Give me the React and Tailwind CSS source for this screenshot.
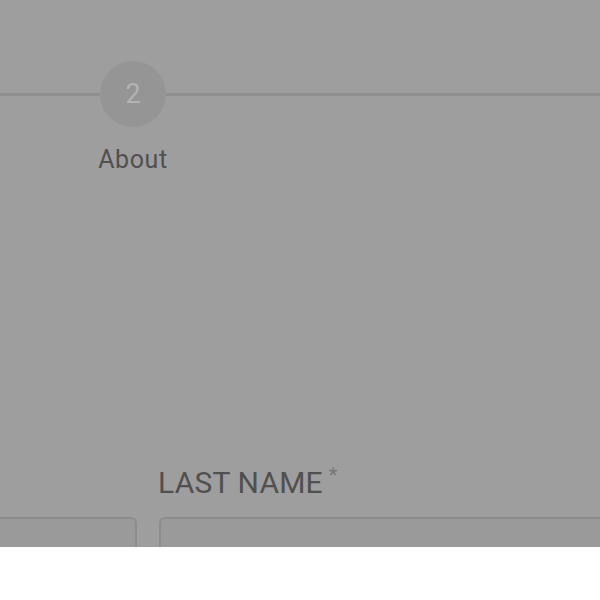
export default function App() {
  return (
    <div className="w-[600px] h-[600px] bg-white overflow-hidden" style={{ fontFamily: "Roboto, sans-serif" }}>
      <div className="h-[547px] bg-[#9e9e9e] flex flex-col">
        <div className="mt-[61px] flex items-center">
          <div className="w-[100px] h-[3px] bg-[#8f8f8f]" />
          <div className="w-[66px] h-[66px] rounded-full bg-[#959595] flex items-center justify-center text-[#b3b3b3] text-[27px]">
            2
          </div>
          <div className="flex-1 h-[3px] bg-[#8f8f8f]" />
        </div>
        <div className="w-[266px] text-center text-[25px] leading-[30px] text-[#505050] mt-[18px] tracking-[0.6px]">About</div>
        <div className="flex-1" />
        <div className="flex gap-[22px]">
          <div className="w-[136px]" />
          <div className="text-[30px] leading-[34px] text-[#505050] tracking-[0.2px] flex items-start">
            LAST NAME
            <span className="text-[20px] leading-[20px] ml-[6px] mt-[-1px] text-[#777]">*</span>
          </div>
        </div>
        <div className="mt-[17px] flex gap-[22px] h-[30px]">
          <div className="w-[137px] border-2 border-l-0 border-b-0 border-[#8c8c8c] rounded-tr-[6px] bg-[#9a9a9a]" />
          <div className="flex-1 border-2 border-r-0 border-b-0 border-[#8c8c8c] rounded-tl-[6px] bg-[#9a9a9a]" />
        </div>
      </div>
    </div>
  );
}
